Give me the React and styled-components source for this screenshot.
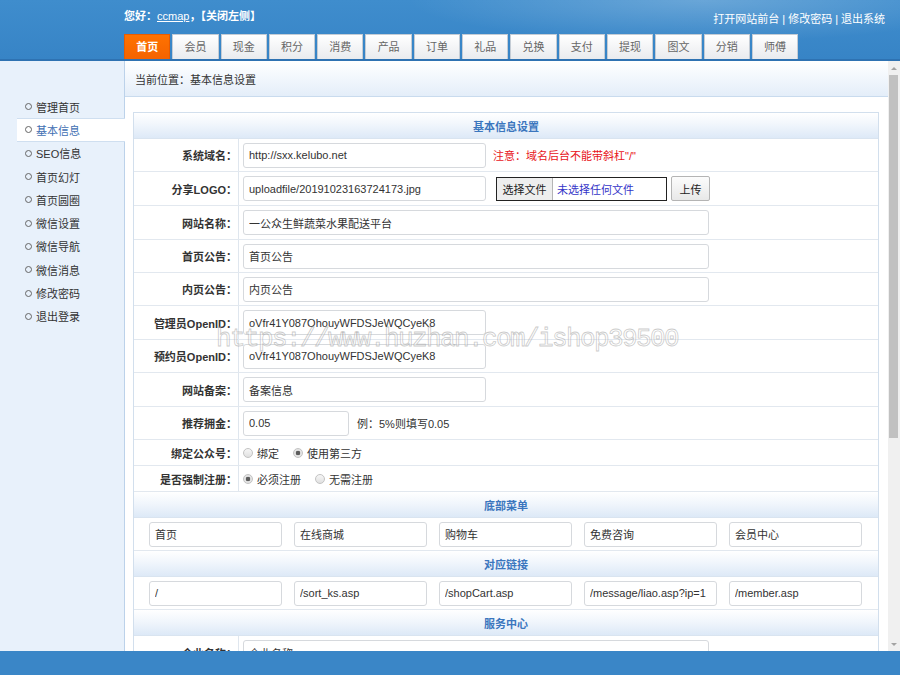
import styled, { createGlobalStyle } from "styled-components";

const GlobalStyle = createGlobalStyle`
  html, body { margin: 0; padding: 0; }
  body {
    font-family: "Liberation Sans", "Noto Sans CJK SC", sans-serif;
    font-size: 11px;
    color: #333;
    overflow: hidden;
  }
  * { box-sizing: border-box; }
`;

const tabs = ["首页", "会员", "现金", "积分", "消费", "产品", "订单", "礼品", "兑换", "支付", "提现", "图文", "分销", "师傅"];
const sideMenu = ["管理首页", "基本信息", "SEO信息", "首页幻灯", "首页圆圈", "微信设置", "微信导航", "微信消息", "修改密码", "退出登录"];
const menuNames = ["首页", "在线商城", "购物车", "免费咨询", "会员中心"];
const menuLinks = ["/", "/sort_ks.asp", "/shopCart.asp", "/message/liao.asp?ip=1", "/member.asp"];
const serviceRows = ["企业名称", "联系人", "联系电话", "手机号码", "联系地址", "电子邮箱", "客服QQ", "版权信息"];

const Page = styled.div`
  position: relative;
  height: 100vh;
  display: flex;
  flex-direction: column;
`;

const Header = styled.header`
  height: 61px;
  flex: none;
  padding: 0 15px 0 124px;
  background:
    radial-gradient(ellipse 420px 60px at 78% 0%, rgba(255, 255, 255, 0.22), transparent 70%),
    linear-gradient(180deg, #3f8dcd 0%, #3784c6 100%);
  border-bottom: 2px solid #2e72b2;
  display: flex;
  flex-direction: column;
`;

const TopLine = styled.div`
  height: 34px;
  display: flex;
  justify-content: space-between;
  align-items: flex-start;
  color: #fff;
`;

const Greeting = styled.div`
  margin-top: 9px;
  line-height: 14px;
  font-weight: bold;

  a {
    color: #fff;
    text-decoration: underline;
    font-weight: normal;
  }
`;

const TopLinks = styled.div`
  margin-top: 12px;
  line-height: 14px;
`;

const Sep = styled.span`
  margin: 0 3px;
`;

const Tabs = styled.nav`
  display: flex;
  gap: 2px;
  height: 25px;
`;

const Tab = styled.div`
  width: 46.3px;
  height: 25px;
  line-height: 24px;
  text-align: center;
  border: 1px solid ${({ $active }) => ($active ? "#e85c00" : "#c4ccd5")};
  border-bottom: none;
  background: ${({ $active }) =>
    $active ? "linear-gradient(180deg, #ff7200, #f46300)" : "linear-gradient(180deg, #ffffff, #e9ebee)"};
  color: ${({ $active }) => ($active ? "#fff" : "#666")};
  font-weight: ${({ $active }) => ($active ? "bold" : "normal")};
`;

const Body = styled.div`
  flex: 1;
  min-height: 0;
  display: flex;
`;

const Sidebar = styled.aside`
  width: 125px;
  flex: none;
  background: #e8f1fb;
  border-right: 1px solid #bcd2ea;
  padding: 34px 0 0 17px;
`;

const NavItem = styled.div`
  height: 23.3px;
  margin-right: -1px;
  padding-left: 8px;
  display: flex;
  align-items: center;
  gap: 4px;
  color: ${({ $active }) => ($active ? "#3f6fb3" : "#333")};
  background: ${({ $active }) => ($active ? "#fff" : "transparent")};
  border-top: 1px solid ${({ $active }) => ($active ? "#cfdff0" : "transparent")};
  border-bottom: 1px solid ${({ $active }) => ($active ? "#cfdff0" : "transparent")};

  &::before {
    content: "";
    width: 5px;
    height: 5px;
    border: 1px solid #666;
    border-radius: 50%;
  }
`;

const Main = styled.main`
  flex: 1;
  min-width: 0;
  overflow: hidden;
  background: #fff;
`;

const ScrollTrack = styled.div`
  width: 12px;
  flex: none;
  background: #f0f0f0;
  display: flex;
  flex-direction: column;
`;

const ScrollArrow = styled.div`
  height: 14px;
  flex: none;
  display: flex;
  align-items: center;
  justify-content: center;
  margin-top: ${({ $down }) => ($down ? "auto" : "0")};

  &::before {
    content: "";
    border-left: 3px solid transparent;
    border-right: 3px solid transparent;
    ${({ $down }) => ($down ? "border-top: 3px solid #a3a3a3;" : "border-bottom: 3px solid #a3a3a3;")}
  }
`;

const ScrollThumb = styled.div`
  height: 363px;
  margin: 0 2px 0 1px;
  background: #c1c1c1;
`;

const Breadcrumb = styled.div`
  height: 36px;
  padding-left: 10px;
  display: flex;
  align-items: center;
  background: linear-gradient(180deg, #ffffff 0%, #f4f8fd 40%, #e4eef9 100%);
  border-bottom: 1px solid #c9dbee;
`;

const Content = styled.div`
  padding: 15px 9px 20px 8px;
`;

const Panel = styled.div`
  border: 1px solid #d2dfed;
`;

const SectionHead = styled.div`
  height: 26px;
  display: flex;
  align-items: center;
  justify-content: center;
  background: linear-gradient(180deg, #ffffff 0%, #f1f6fc 45%, #dde9f7 100%);
  border-bottom: 1px solid #d9e4f0;
  color: #3b76be;
  font-weight: bold;
`;

const Row = styled.div`
  height: ${({ $h }) => $h || 33}px;
  display: flex;
  border-bottom: 1px solid #e2e8ef;
`;

const Label = styled.div`
  width: 105px;
  flex: none;
  border-right: 1px solid #dfe6ee;
  display: flex;
  align-items: center;
  justify-content: flex-end;
  padding-right: 1px;
  font-weight: bold;
  color: #333;
`;

const Value = styled.div`
  flex: 1;
  display: flex;
  align-items: center;
  padding-left: 4px;
`;

const Field = styled.input.attrs({ readOnly: true })`
  width: ${({ $w }) => $w || 243}px;
  height: 25px;
  padding: 0 5px;
  border: 1px solid #d6d9dd;
  border-radius: 3px;
  font: 11px "Liberation Sans", "Noto Sans CJK SC", sans-serif;
  color: #333;
  outline: none;
`;

const Note = styled.span`
  margin-left: ${({ $gap }) => $gap || 7}px;
  color: ${({ $red }) => ($red ? "#e8141a" : "#333")};
`;

const FileBox = styled.div`
  margin-left: 10px;
  width: 171px;
  height: 24px;
  border: 1px solid #222;
  display: flex;
  align-items: center;
`;

const FileButton = styled.span`
  height: 100%;
  width: 56px;
  display: flex;
  align-items: center;
  justify-content: center;
  background: #eeeeee;
  border-right: 1px solid #b5b5b5;
  color: #222;
`;

const FileText = styled.span`
  padding-left: 4px;
  color: #3434c8;
`;

const UploadButton = styled.button`
  margin-left: 4px;
  width: 39px;
  height: 25px;
  border: 1px solid #b4b4b4;
  border-radius: 2px;
  background: linear-gradient(180deg, #fcfcfc, #e8e8e8);
  font: 11px "Liberation Sans", "Noto Sans CJK SC", sans-serif;
  color: #222;
  padding: 0;
`;

const Option = styled.span`
  display: flex;
  align-items: center;
  gap: 4px;
  margin-right: 14px;
`;

const Radio = styled.span`
  width: 10px;
  height: 10px;
  border-radius: 50%;
  border: 1px solid #c3c3c3;
  background: ${({ $checked }) =>
    $checked
      ? "radial-gradient(circle, #5c5c5c 0 2px, #e4e4e4 2.6px)"
      : "linear-gradient(180deg, #f6f6f6, #e0e0e0)"};
`;

const MenuRow = styled.div`
  height: 33px;
  display: flex;
  align-items: center;
  gap: 12px;
  padding-left: 15px;
  border-bottom: 1px solid #e2e8ef;
`;

const SubmitRow = styled.div`
  height: 50px;
  display: flex;
  align-items: center;
  justify-content: center;
`;

const SubmitButton = styled.button`
  width: 70px;
  height: 28px;
  border: 1px solid #2e72b2;
  border-radius: 3px;
  background: #3a86c8;
  color: #fff;
  font: 12px "Liberation Sans", "Noto Sans CJK SC", sans-serif;
`;

const Footer = styled.footer`
  height: 24px;
  flex: none;
  background: #3a86c7;
`;

const Watermark = styled.div`
  position: absolute;
  left: 216px;
  top: 322px;
  font-family: "Liberation Mono", monospace;
  font-size: 26px;
  letter-spacing: -1.6px;
  line-height: 34px;
  color: rgba(255, 255, 255, 0.4);
  -webkit-text-stroke: 0.8px rgba(150, 150, 150, 0.5);
  pointer-events: none;
  white-space: nowrap;
`;

const FormRow = ({ label, h, children }) => (
  <Row $h={h}>
    <Label>{label}：</Label>
    <Value>{children}</Value>
  </Row>
);

export default function App() {
  return (
    <>
      <GlobalStyle />
      <Page>
        <Header>
          <TopLine>
            <Greeting>
              您好：<a>ccmap</a>，【关闭左侧】
            </Greeting>
            <TopLinks>
              打开网站前台<Sep>|</Sep>修改密码<Sep>|</Sep>退出系统
            </TopLinks>
          </TopLine>
          <Tabs>
            {tabs.map((t, i) => (
              <Tab key={t} $active={i === 0}>
                {t}
              </Tab>
            ))}
          </Tabs>
        </Header>

        <Body>
          <Sidebar>
            {sideMenu.map((m, i) => (
              <NavItem key={m} $active={i === 1}>
                {m}
              </NavItem>
            ))}
          </Sidebar>

          <Main>
            <Breadcrumb>当前位置：基本信息设置</Breadcrumb>
            <Content>
              <Panel>
                <SectionHead>基本信息设置</SectionHead>
                <FormRow label="系统域名" h={33}>
                  <Field defaultValue="http://sxx.kelubo.net" />
                  <Note $red>注意：域名后台不能带斜杠"/"</Note>
                </FormRow>
                <FormRow label="分享LOGO" h={34}>
                  <Field defaultValue="uploadfile/20191023163724173.jpg" />
                  <FileBox>
                    <FileButton>选择文件</FileButton>
                    <FileText>未选择任何文件</FileText>
                  </FileBox>
                  <UploadButton>上传</UploadButton>
                </FormRow>
                <FormRow label="网站名称" h={34}>
                  <Field $w={466} defaultValue="一公众生鲜蔬菜水果配送平台" />
                </FormRow>
                <FormRow label="首页公告" h={33}>
                  <Field $w={466} defaultValue="首页公告" />
                </FormRow>
                <FormRow label="内页公告" h={33}>
                  <Field $w={466} defaultValue="内页公告" />
                </FormRow>
                <FormRow label="管理员OpenID" h={34}>
                  <Field defaultValue="oVfr41Y087OhouyWFDSJeWQCyeK8" />
                </FormRow>
                <FormRow label="预约员OpenID" h={33}>
                  <Field defaultValue="oVfr41Y087OhouyWFDSJeWQCyeK8" />
                </FormRow>
                <FormRow label="网站备案" h={34}>
                  <Field defaultValue="备案信息" />
                </FormRow>
                <FormRow label="推荐拥金" h={33}>
                  <Field $w={106} defaultValue="0.05" />
                  <Note $gap={8}>例：5%则填写0.05</Note>
                </FormRow>
                <FormRow label="绑定公众号" h={26}>
                  <Option>
                    <Radio />
                    绑定
                  </Option>
                  <Option>
                    <Radio $checked />
                    使用第三方
                  </Option>
                </FormRow>
                <FormRow label="是否强制注册" h={26}>
                  <Option>
                    <Radio $checked />
                    必须注册
                  </Option>
                  <Option>
                    <Radio />
                    无需注册
                  </Option>
                </FormRow>

                <SectionHead>底部菜单</SectionHead>
                <MenuRow>
                  {menuNames.map((n) => (
                    <Field key={n} $w={133} defaultValue={n} />
                  ))}
                </MenuRow>
                <SectionHead>对应链接</SectionHead>
                <MenuRow>
                  {menuLinks.map((n) => (
                    <Field key={n} $w={133} defaultValue={n} />
                  ))}
                </MenuRow>

                <SectionHead>服务中心</SectionHead>
                {serviceRows.map((r) => (
                  <FormRow key={r} label={r} h={34}>
                    <Field $w={466} defaultValue={r} />
                  </FormRow>
                ))}
                <SubmitRow>
                  <SubmitButton>提交保存</SubmitButton>
                </SubmitRow>
              </Panel>
            </Content>
          </Main>

          <ScrollTrack>
            <ScrollArrow />
            <ScrollThumb />
            <ScrollArrow $down />
          </ScrollTrack>
        </Body>

        <Footer />
        <Watermark>https://www.huzhan.com/ishop39500</Watermark>
      </Page>
    </>
  );
}
